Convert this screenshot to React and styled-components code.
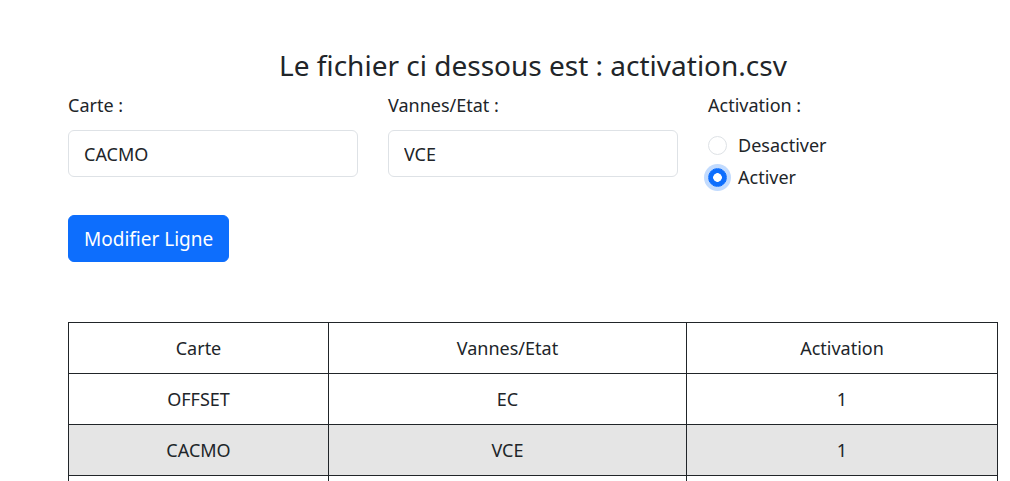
import React, { useState } from 'react';
import styled, { createGlobalStyle } from 'styled-components';

const GlobalStyle = createGlobalStyle`
    body {
        margin: 0;
        background: #fff;
        color: #212529;
        font-family: 'Noto Sans', 'Open Sans', sans-serif;
        font-size: 18px;
    }
`;

const Page = styled.div`
    width: 930px;
    margin-left: 68px;
    padding-top: 48px;
`;

const Title = styled.h3`
    margin: 0 0 10px;
    font-size: 28px;
    font-weight: 400;
    line-height: 34px;
    text-align: center;
`;

const FieldRow = styled.div`
    display: grid;
    grid-template-columns: repeat(3, 290px);
    column-gap: 30px;
    align-items: start;
`;

const Field = styled.div`
    display: flex;
    flex-direction: column;
`;

const Label = styled.label`
    display: block;
    line-height: 27px;
    margin-bottom: ${({ $gap }) => $gap || 11}px;
`;

const Input = styled.input`
    box-sizing: border-box;
    width: 100%;
    height: 47px;
    padding: 0 15px;
    font-family: inherit;
    font-size: 18px;
    color: #212529;
    border: 1px solid #dee2e6;
    border-radius: 6px;
    outline: none;
`;

const RadioLine = styled.label`
    display: flex;
    align-items: center;
    gap: 11px;
    height: 32px;
    cursor: pointer;
`;

const Radio = styled.input.attrs({ type: 'radio' })`
    appearance: none;
    box-sizing: border-box;
    width: 19px;
    height: 19px;
    margin: 0;
    border: 1px solid #dee2e6;
    border-radius: 50%;
    background: #fff;

    &:checked {
        border-color: #0d6efd;
        background: radial-gradient(circle, #fff 0 4px, #0d6efd 4.6px);
        box-shadow: 0 0 0 4px rgba(13, 110, 253, 0.25);
    }
`;

const Button = styled.button`
    display: block;
    margin-top: 22px;
    height: 47px;
    padding: 0 15px;
    font-family: inherit;
    font-size: 19px;
    color: #fff;
    background: #0d6efd;
    border: 1px solid #0d6efd;
    border-radius: 6px;
`;

const Table = styled.table`
    margin-top: 60px;
    width: 930px;
    border-collapse: collapse;
    table-layout: fixed;
`;

const Cell = styled.td`
    height: 50px;
    padding: 0;
    border: 1px solid #212529;
    text-align: center;
    font-weight: 400;
    background: ${({ $striped }) => ($striped ? '#e5e5e5' : '#fff')};
`;

const rows = [
    ['OFFSET', 'EC', '1'],
    ['CACMO', 'VCE', '1'],
    ['', '', ''],
];

export default function App() {
    const [active, setActive] = useState('1');

    return (
        <Page>
            <GlobalStyle />
            <Title>Le fichier ci dessous est : activation.csv</Title>
            <FieldRow>
                <Field>
                    <Label>Carte :</Label>
                    <Input defaultValue="CACMO" />
                </Field>
                <Field>
                    <Label>Vannes/Etat :</Label>
                    <Input defaultValue="VCE" />
                </Field>
                <Field>
                    <Label $gap={10}>Activation :</Label>
                    <RadioLine>
                        <Radio name="act" checked={active === '0'} onChange={() => setActive('0')} />
                        Desactiver
                    </RadioLine>
                    <RadioLine>
                        <Radio name="act" checked={active === '1'} onChange={() => setActive('1')} />
                        Activer
                    </RadioLine>
                </Field>
            </FieldRow>
            <Button>Modifier Ligne</Button>
            <Table>
                <colgroup>
                    <col style={{ width: 260 }} />
                    <col style={{ width: 358 }} />
                    <col />
                </colgroup>
                <thead>
                    <tr>
                        <Cell as="th">Carte</Cell>
                        <Cell as="th">Vannes/Etat</Cell>
                        <Cell as="th">Activation</Cell>
                    </tr>
                </thead>
                <tbody>
                    {rows.map((row, i) => (
                        <tr key={i}>
                            {row.map((value, j) => (
                                <Cell key={j} $striped={i % 2 === 1}>
                                    {value}
                                </Cell>
                            ))}
                        </tr>
                    ))}
                </tbody>
            </Table>
        </Page>
    );
}
